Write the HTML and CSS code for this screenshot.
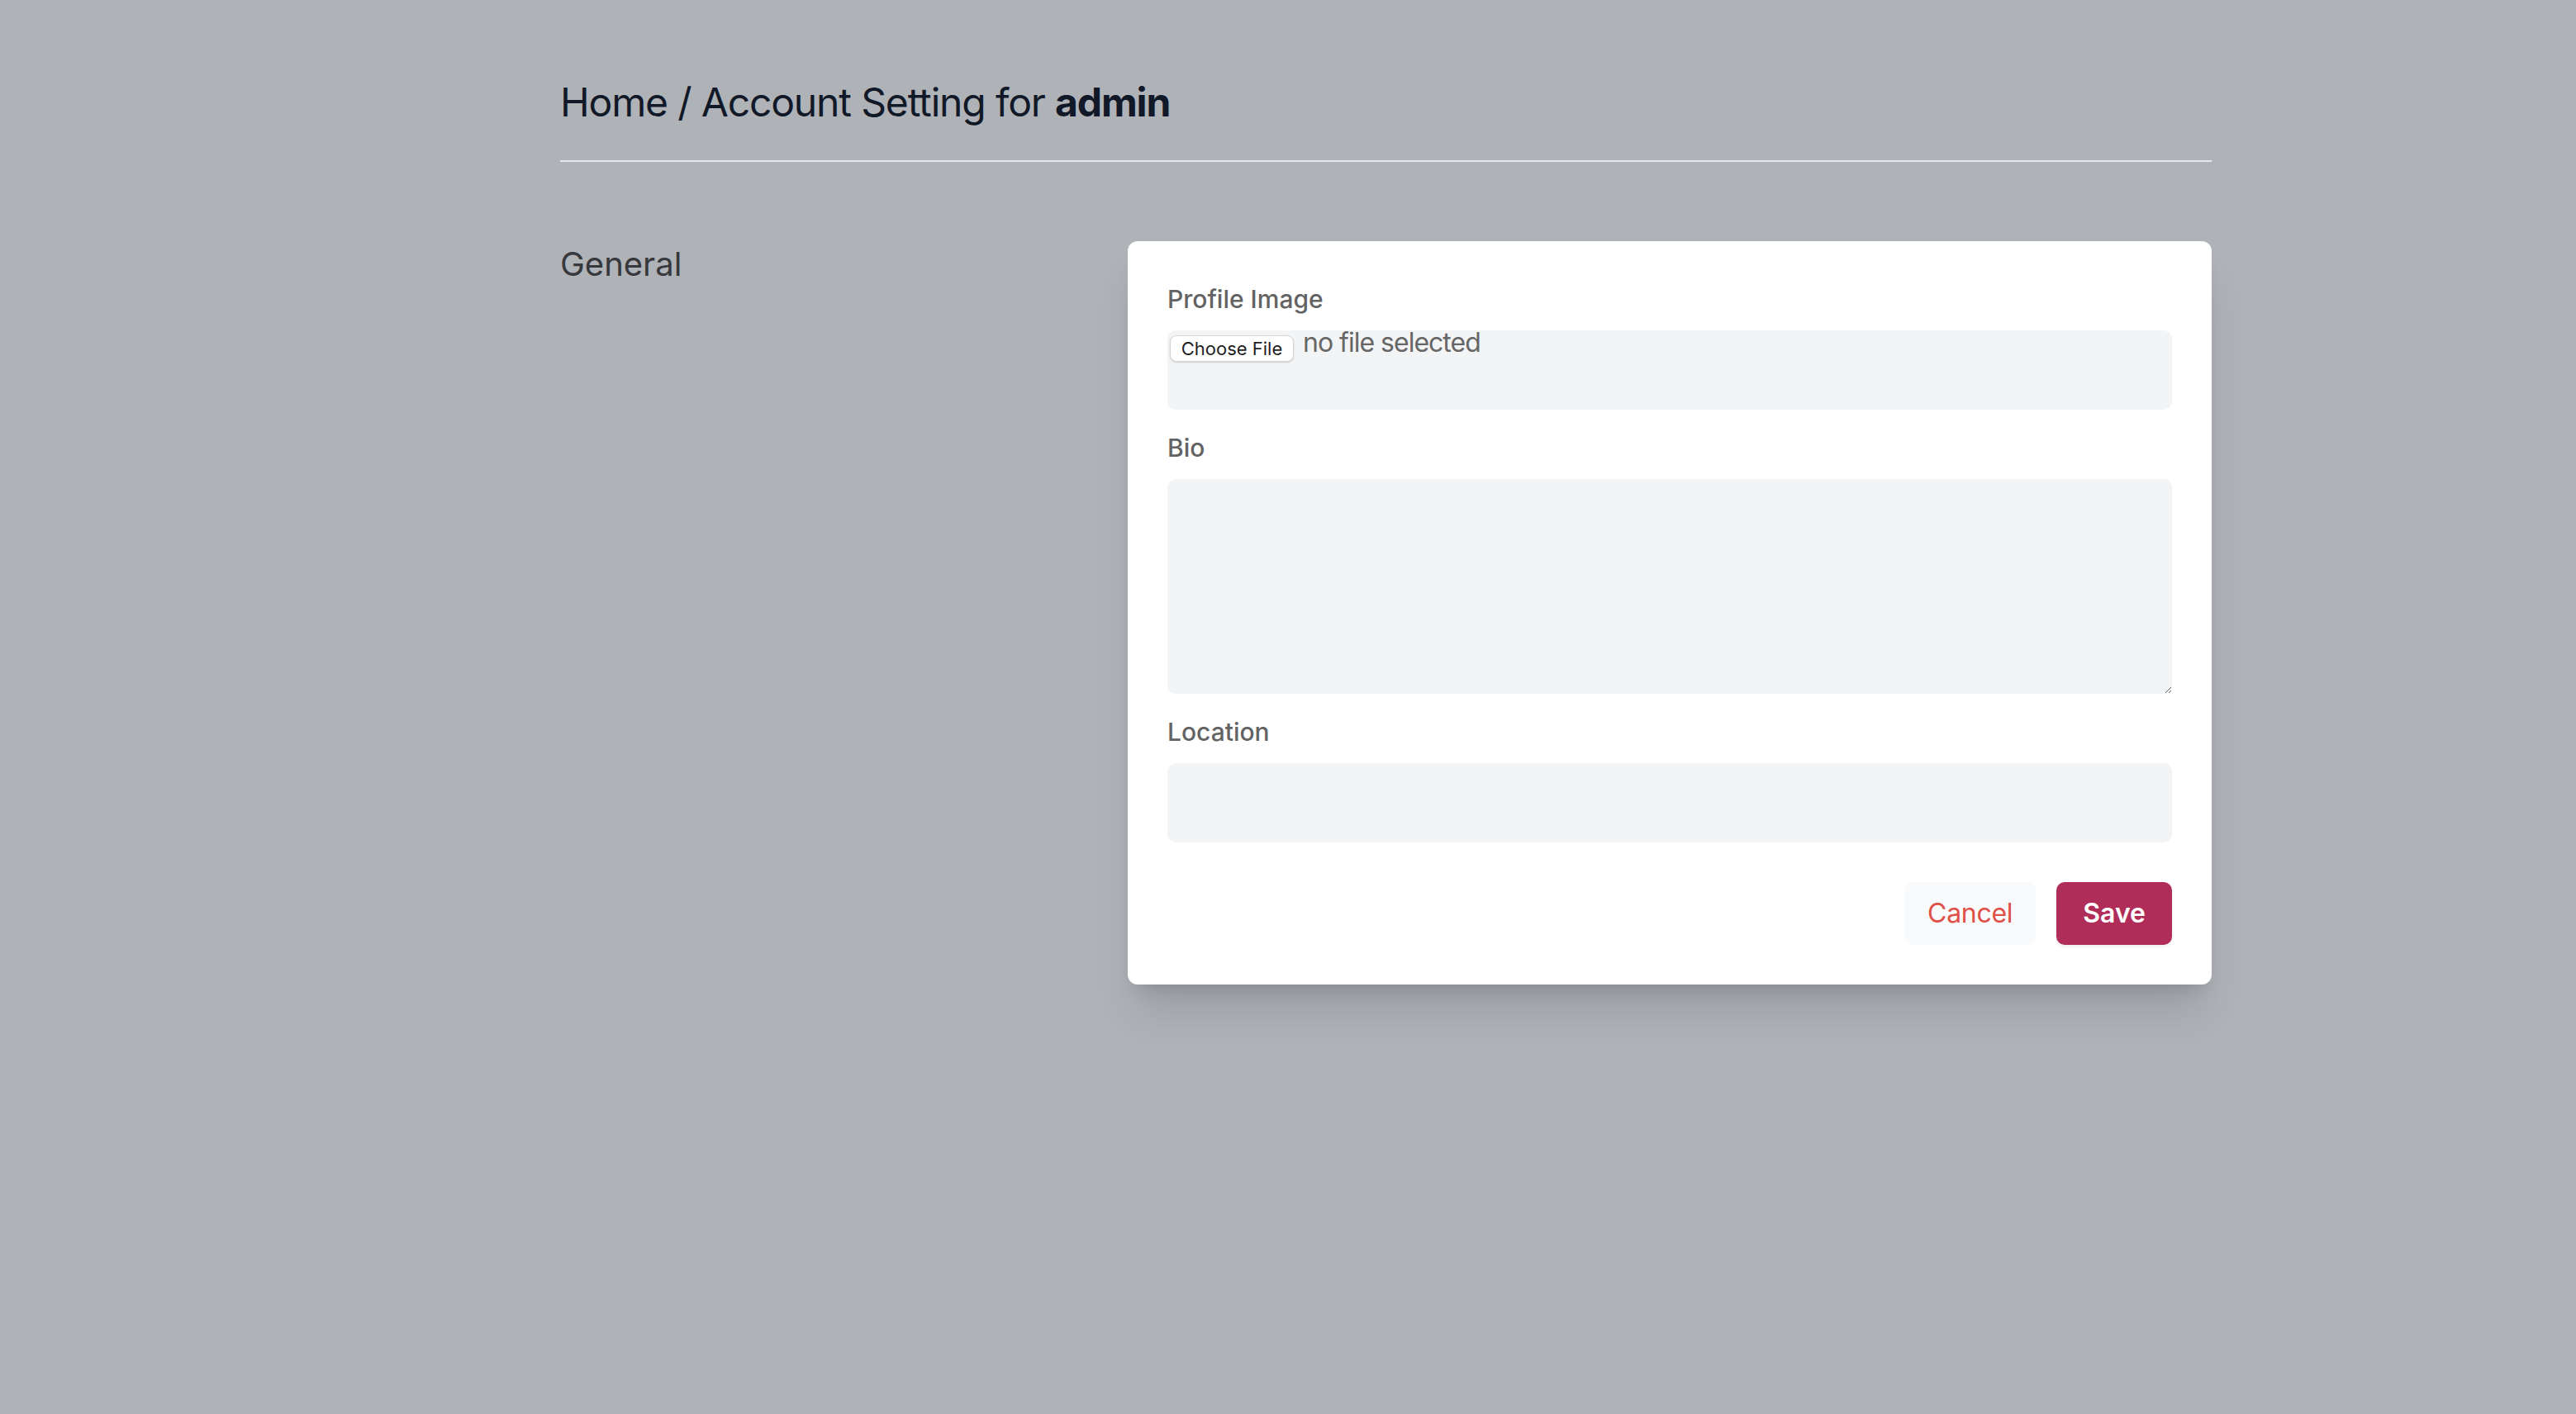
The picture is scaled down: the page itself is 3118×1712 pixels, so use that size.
FILE: index.html
```html
<!DOCTYPE html>
<html lang="en">
<head>
<meta charset="utf-8">
<title>Account Setting</title>
<link rel="stylesheet" href="styles.css">
</head>
<body>
<main class="page">
  <header class="page-header">
    <h1 class="title">Home / Account Setting for <strong>admin</strong></h1>
  </header>
  <section class="settings">
    <h2 class="section-title">General</h2>
    <form class="card">
      <label class="field-label">Profile Image</label>
      <div class="file-box">
        <button type="button" class="file-btn">Choose File</button>
        <span class="file-name">no file selected</span>
      </div>
      <label class="field-label spaced" for="bio">Bio</label>
      <textarea id="bio" class="textarea"></textarea>
      <label class="field-label spaced" for="loc">Location</label>
      <input id="loc" type="text" class="text-input">
      <div class="actions">
        <button type="button" class="btn btn-cancel">Cancel</button>
        <button type="button" class="btn btn-save">Save</button>
      </div>
    </form>
  </section>
</main>
</body>
</html>
```
FILE: styles.css
```css
* { box-sizing: border-box; }
html, body {
  margin: 0;
  background: #afb2b7;
  min-height: 100%;
}
body {
  font-family: Inter, "Noto Sans", "Liberation Sans", sans-serif;
  min-height: 1712px;
}
.page {
  margin-left: 678px;
  width: 1999px;
}
.page-header {
  padding-top: 92px;
  border-bottom: 2px solid #e5e7eb;
  padding-bottom: 38px;
}
.title {
  margin: 0;
  font-size: 48px;
  line-height: 64px;
  font-weight: 400;
  letter-spacing: -1.15px;
  color: #111827;
}
.title strong { font-weight: 700; }
.settings {
  margin-top: 96px;
  display: grid;
  grid-template-columns: 1fr 1312px;
  column-gap: 48px;
  align-items: start;
}
.section-title {
  margin: 0;
  font-size: 40px;
  line-height: 56px;
  font-weight: 400;
  color: #36383c;
}
.card {
  background: #fff;
  border-radius: 12px;
  padding: 50px 48px 48px 48px;
  box-shadow: 0 40px 50px -10px rgba(0,0,0,0.12), 0 16px 20px -12px rgba(0,0,0,0.12);
  display: flex;
  flex-direction: column;
}
.field-label {
  display: block;
  font-size: 30px;
  line-height: 40px;
  font-weight: 500;
  color: #636363;
  margin-bottom: 18px;
}
.field-label.spaced { margin-top: 26px; }
.file-box {
  height: 96px;
  background: #f3f4f6;
  border-radius: 10px;
  display: flex;
  align-items: flex-start;
}
.file-btn {
  margin: 6px 0 0 3px;
  width: 150px;
  height: 32px;
  padding: 0;
  font-family: Inter, "Noto Sans", sans-serif;
  font-size: 22px;
  color: #1f1f1f;
  background: #fff;
  border: 1px solid #d4d4d4;
  border-radius: 8px;
  box-shadow: 0 1px 2px rgba(0,0,0,0.15);
}
.file-name {
  margin-left: 11px;
  margin-top: -1px;
  font-size: 32px;
  line-height: 32px;
  letter-spacing: -1px;
  color: #666666;
}
.textarea {
  display: block;
  width: 100%;
  height: 260px;
  border: none;
  background: #f3f4f6;
  border-radius: 10px;
  resize: vertical;
  font-family: inherit;
  font-size: 32px;
  outline: none;
}
.text-input {
  display: block;
  width: 100%;
  height: 96px;
  border: none;
  background: #f3f4f6;
  border-radius: 10px;
  font-family: inherit;
  font-size: 32px;
  outline: none;
}
.actions {
  margin-top: 48px;
  display: flex;
  justify-content: flex-end;
  gap: 25px;
}
.btn {
  height: 76px;
  border: none;
  border-radius: 10px;
  font-family: inherit;
  font-size: 32px;
  line-height: 48px;
}
.btn-cancel {
  padding: 0 28px;
  background: #f9fafb;
  color: #df5048;
  font-weight: 400;
  letter-spacing: -0.3px;
}
.btn-save {
  padding: 0 32px;
  background: #b02d5a;
  color: #fff;
  font-weight: 600;
  box-shadow: 0 2px 4px rgba(0,0,0,0.08);
}
```
